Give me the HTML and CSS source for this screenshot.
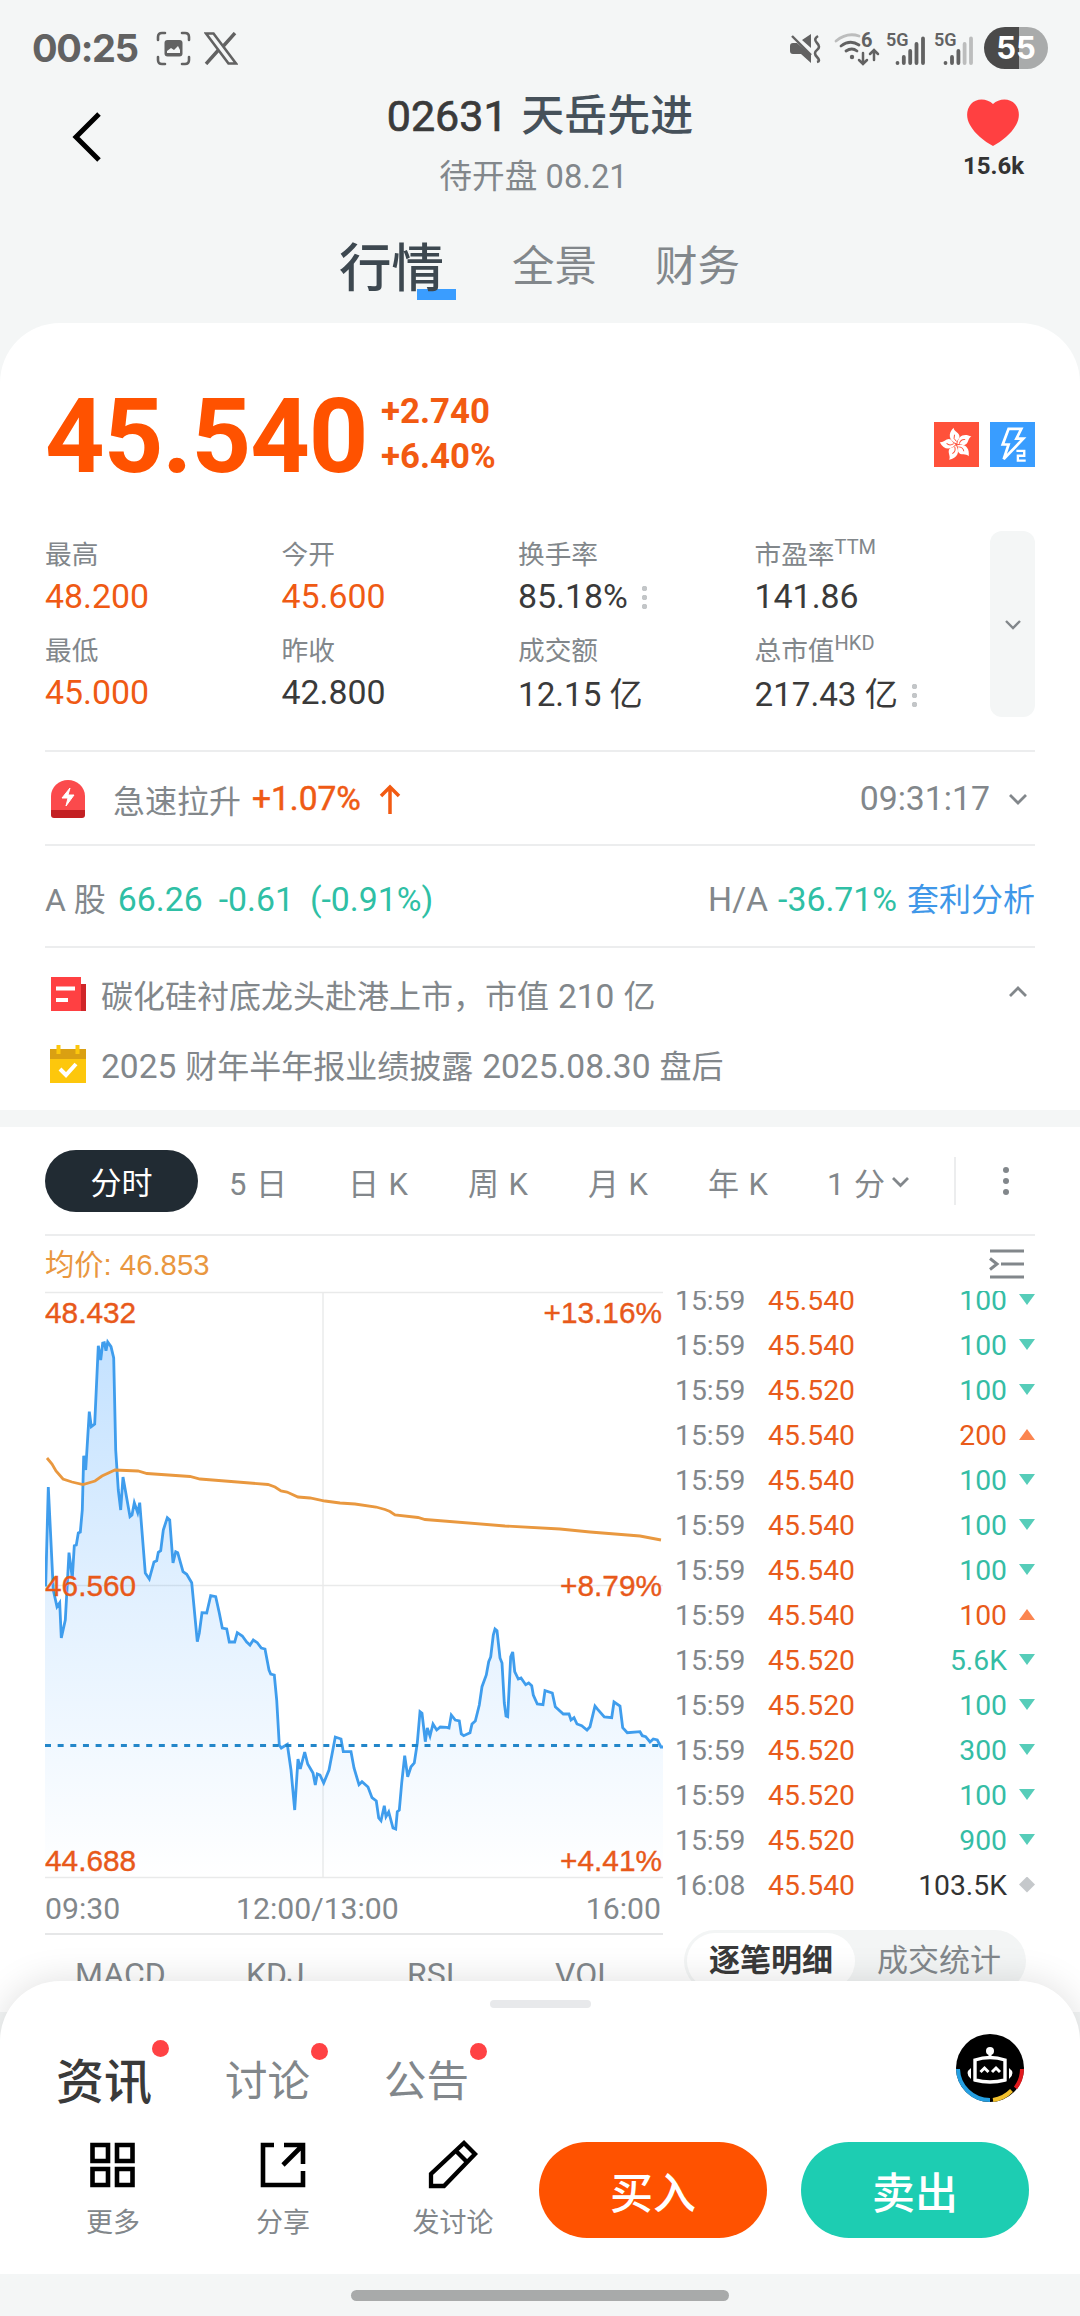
FILE: index.html
```html
<!DOCTYPE html>
<html lang="zh-CN">
<head>
    <meta charset="UTF-8">
    <meta name="viewport" content="width=device-width, initial-scale=1.0">
    <title>02631 天岳先进</title>
    <link rel="stylesheet" href="styles.css">
</head>
<body>
<div class="page">
    <div class="status-bar">
        <div class="status-left">
            <span class="clock">00:25</span>
            <svg width="35" height="35" viewBox="0 0 35 35" fill="none" stroke="#626262" stroke-width="2.6" stroke-linecap="round">
                <path d="M2 9V6q0-4 4-4h3M26 2h3q4 0 4 4v3M33 26v3q0 4-4 4h-3M9 33H6q-4 0-4-4v-3"/>
                <rect x="8.500" y="9" width="18" height="16.500" rx="3" fill="#626262" stroke="none"/>
                <path d="M11 22v-2l4-3 3 2 4-4 2 4v3z" fill="#f4f6f6" stroke="none"/>
            </svg>
            <svg class="x-icon" width="34" height="33" viewBox="0 0 34 33" fill="none" stroke="#626262">
                <path d="M2 1.5h7.500L32 31.500h-7.500z" stroke-width="2.600"/>
                <path d="M31 1L19 14.500M14 18.500L2 32" stroke-width="3.400"/>
            </svg>
        </div>
        <div class="status-right">
            <svg width="196" height="42" viewBox="788 27 196 42">
                <!-- muted speaker -->
                <g fill="#626262">
                    <path d="M790 46q0-3 3-3h4l14 12v8l-10-9h-8q-3 0-3-3zM802 40l9-6v14z"/>
                    <path d="M792 36l19 19" stroke="#626262" stroke-width="2.400"/>
                    <path d="M818 36q-5 3-1 7t0 7q-4 3 0 7t0 5" fill="none" stroke="#626262" stroke-width="2.600"/>
                </g>
                <!-- wifi 6 -->
                <g fill="none" stroke="#626262" stroke-width="2.800" stroke-linecap="round">
                    <path d="M836 41q11-9 23-5" stroke="#bcbdbd"/>
                    <path d="M841 46q9-7 18-1M846 51q6-4 11 0"/>
                    <path d="M863 53v10M859 60l4 4 4-4M874 60V51M870 54l4-4 4 4" stroke-width="2.500"/>
                </g>
                <circle cx="852" cy="57" r="2.200" fill="#626262"/>
                <text x="861" y="47" class="sig-text">6</text>
                <text x="886" y="46" class="sig-text sig-5g">5G</text>
                <text x="934" y="46" class="sig-text sig-5g">5G</text>
                <g stroke="#626262" stroke-width="3.800" stroke-linecap="round">
                    <path d="M897.500 63v0.100M903.800 57v6M910.200 51v12M916.500 44v19M923 38.500v24.500"/>
                    <path d="M945.500 63v0.100M952 57v6M958.400 51v12"/>
                    <path d="M964.600 44v19M971 38.500v24.500" stroke="#bcbdbd"/>
                </g>
            </svg>
            <span class="battery">55</span>
        </div>
    </div>

    <div class="header">
        <svg class="back" width="30" height="50" viewBox="0 0 30 50" fill="none" stroke="#000" stroke-width="5">
            <path d="M27 2L4 25l23 23"/>
        </svg>
        <div class="title-box">
            <div class="title"><span class="code">02631</span> 天岳先进</div>
            <div class="subtitle">待开盘 08.21</div>
        </div>
        <div class="favorite">
            <svg width="54" height="48" viewBox="0 0 54 48">
                <path d="M27 5C21-1 10-1 5 5c-5 6-5 14-1 21 5 9 14 16 23 21 9-5 18-12 23-21 4-7 4-15-1-21C44-1 33-1 27 5z" fill="#ff4041"/>
            </svg>
            <span>15.6k</span>
        </div>
    </div>

    <div class="top-tabs">
        <span class="top-tab active">行情</span>
        <span class="top-tab">全景</span>
        <span class="top-tab">财务</span>
    </div>

    <div class="card quote">
        <div class="price-row">
            <span class="price">45.540</span>
            <div class="change">
                <span>+2.740</span>
                <span>+6.40%</span>
            </div>
            <div class="badges">
                <svg width="45" height="45" viewBox="-23 -23 46 46">
                    <rect x="-23" y="-23" width="46" height="46" fill="#ff513a"/>
                    <g fill="#fff">
                        <path id="petal" d="M0 -1C-8-4-9-11-3-17C-3-13 4-12 3-7C2-5 0-4 0-1z"/>
                        <use href="#petal" transform="rotate(72)"/>
                        <use href="#petal" transform="rotate(144)"/>
                        <use href="#petal" transform="rotate(216)"/>
                        <use href="#petal" transform="rotate(288)"/>
                    </g>
                    <g fill="none" stroke="#ff513a" stroke-width="1">
                        <path id="vein" d="M0-3Q-4-6-2-10"/>
                        <use href="#vein" transform="rotate(72)"/>
                        <use href="#vein" transform="rotate(144)"/>
                        <use href="#vein" transform="rotate(216)"/>
                        <use href="#vein" transform="rotate(288)"/>
                    </g>
                </svg>
                <svg width="45" height="45" viewBox="0 0 46 46" fill="none" stroke="#fff" stroke-width="2.800">
                    <rect width="46" height="46" fill="#399dff" stroke="none"/>
                    <path d="M19 7h13l-5 10h7L14 38l5-15h-6z"/>
                    <path d="M27 29.500h8v5h-6.500v5h8" stroke-width="2.400"/>
                </svg>
            </div>
        </div>

        <div class="stats-row">
            <div class="stats">
                <div class="stat"><label>最高</label><b class="up">48.200</b></div>
                <div class="stat"><label>今开</label><b class="up">45.600</b></div>
                <div class="stat"><label>换手率</label><b>85.18%<i class="dots"></i></b></div>
                <div class="stat"><label>市盈率<sup>TTM</sup></label><b>141.86</b></div>
                <div class="stat"><label>最低</label><b class="up">45.000</b></div>
                <div class="stat"><label>昨收</label><b>42.800</b></div>
                <div class="stat"><label>成交额</label><b class="unit">12.15 亿</b></div>
                <div class="stat"><label>总市值<sup>HKD</sup></label><b class="unit">217.43 亿<i class="dots"></i></b></div>
            </div>
            <div class="expand">
                <svg width="16" height="10" viewBox="0 0 16 10" fill="none" stroke="#82878b" stroke-width="2.400"><path d="M1 1l7 7 7-7"/></svg>
            </div>
        </div>

        <div class="line-row alert-row">
            <svg class="row-icon siren" width="34" height="38" viewBox="0 0 34 38">
                <path d="M0 31V16a17 16 0 0 1 34 0v15z" fill="#fb4a4c"/>
                <path d="M0 30h34v5q0 3-3 3H3q-3 0-3-3z" fill="#c32023"/>
                <path d="M19 8l-8 10h6l-2 8 8-11h-6z" fill="#fff" stroke="#fff" stroke-width="1"/>
            </svg>
            <span>急速拉升</span>
            <span class="up alert-value">+1.07%</span>
            <svg width="22" height="30" viewBox="0 0 22 30" fill="none" stroke="#f25a12" stroke-width="3.500"><path d="M11 30V3M2 12l9-9 9 9"/></svg>
            <span class="right-part time">09:31:17
                <svg width="20" height="12" viewBox="0 0 20 12" fill="none" stroke="#82878b" stroke-width="2.800"><path d="M2 2l8 8 8-8"/></svg>
            </span>
        </div>

        <div class="line-row ah-row">
            <span>A 股</span>
            <span class="down">66.26</span>
            <span class="down gap-wide">-0.61</span>
            <span class="down gap-wide">(-0.91%)</span>
            <span class="right-part"><b>H/A</b> <span class="down">-36.71%</span> <a class="link">套利分析</a></span>
        </div>

        <div class="news">
            <div class="news-row">
                <svg class="row-icon" width="38" height="36" viewBox="0 0 38 36">
                    <path d="M29 8h7v27h-7z" fill="#d02629"/>
                    <path d="M1 1h30v34H1z" fill="#ff4042"/>
                    <path d="M6 12.500h19M6 24h12" stroke="#fff" stroke-width="4"/>
                </svg>
                <span>碳化硅衬底龙头赴港上市，市值 <b>210</b> 亿</span>
                <svg class="right-part chev" width="20" height="12" viewBox="0 0 20 12" fill="none" stroke="#82878b" stroke-width="2.800"><path d="M2 10l8-8 8 8"/></svg>
            </div>
            <div class="news-row">
                <svg class="row-icon" width="38" height="38" viewBox="0 0 38 38">
                    <path d="M0 4h36v34H0z" fill="#fdc70c"/>
                    <path d="M0 4h36v10H0z" fill="#daa012"/>
                    <path d="M8.500 0v9M27.500 0v9" stroke="#fdc70c" stroke-width="4"/>
                    <path d="M10 24l6 6 10-11" stroke="#fff" stroke-width="4" fill="none"/>
                </svg>
                <span><b>2025</b> 财年半年报业绩披露 <b>2025.08.30</b> 盘后</span>
            </div>
        </div>
    </div>

    <div class="chart-section">
        <div class="periods">
            <span class="period active">分时</span>
            <span class="period">5 日</span>
            <span class="period">日 K</span>
            <span class="period">周 K</span>
            <span class="period">月 K</span>
            <span class="period">年 K</span>
            <span class="period minute">1 分 <svg width="19" height="12" viewBox="0 0 19 12" fill="none" stroke="#82878b" stroke-width="2.800"><path d="M2 2l7.500 7.500L17 2"/></svg></span>
            <span class="period-more"><svg width="8" height="30" viewBox="0 0 8 30" fill="#82878b"><circle cx="4" cy="4" r="3"/><circle cx="4" cy="15" r="3"/><circle cx="4" cy="26" r="3"/></svg></span>
        </div>
        <div class="avg-row">
            <span>均价: 46.853</span>
            <svg width="36" height="32" viewBox="0 0 36 32" fill="none" stroke="#82878b" stroke-width="3">
                <path d="M1 3h34M12 16h23M1 29h34M1 10.500l7 5.500-7 5.500"/>
            </svg>
        </div>
        <div class="chart-body">
            <div class="chart-left">
                <svg class="chart" width="618" height="588" viewBox="45 1291 618 588">
                    <defs>
                        <linearGradient id="fill" gradientUnits="userSpaceOnUse" x1="0" y1="1342" x2="0" y2="1878">
                            <stop offset="0" stop-color="#3a9dff" stop-opacity="0.300"/>
                            <stop offset="0.500" stop-color="#3a9dff" stop-opacity="0.140"/>
                            <stop offset="1" stop-color="#3a9dff" stop-opacity="0"/>
                        </linearGradient>
                    </defs>
                    <path d="M45 1292.500h618M45 1585.500h618M45 1877.500h618M323 1293v585" stroke="#e9eaea" stroke-width="1.400" fill="none"/>
                    <polygon class="price-line" points="30,1890 30,1585 45.7,1585 48.3,1487 53.3,1590 57,1606.7 59.7,1602.7 61.3,1638 65.3,1620 69,1552.7 72.3,1578 74.3,1545.7 76.3,1545 78.3,1533 80.3,1532 82.3,1510 83.7,1455.7 85.7,1470 89.3,1411.7 91.3,1426.7 94.7,1424 98.3,1345.7 100.7,1360 102.7,1343 104.3,1342.6 106,1350.7 107.7,1342 111,1346.7 113.7,1358 115.7,1450 118.3,1490 120.7,1510 123,1477 126.7,1498 130,1516.7 132,1515 134.3,1502.7 137.7,1512.7 139.7,1502.7 145.3,1573 149.3,1579 154,1562 156.7,1560.7 158.3,1552.3 160.7,1550.7 163.3,1530 167.3,1517.7 169.7,1520 173,1563 175.7,1551.7 177.7,1552.7 183,1571.7 186.7,1574.3 191.7,1582.7 194,1606.7 197.3,1641.7 199.3,1633 202,1612.7 206.7,1613 210.7,1595.7 215.7,1596.7 219.3,1613 222.3,1628 226.7,1629 229.3,1642 234.7,1642 237.3,1632.7 242.3,1636 246.7,1642 250,1645 253.3,1640 257.3,1642.7 261.3,1648 265,1649 269,1670 270.7,1674 274.3,1675 276.7,1700 279.3,1745 281.3,1748 287.3,1744.3 291,1770 294.7,1810 298,1759 300.3,1769 304.7,1752 307.7,1764 313,1773 315.3,1785 317.3,1774 320,1775 323.7,1783 329,1770 335.3,1737 341,1739 343.3,1751.7 351,1751.7 354,1768 359,1784.7 362,1781.7 368,1787 372,1797.7 376.3,1801 378.7,1818 381,1820.7 384.3,1805.7 386,1816.7 388.7,1812 393,1828 395.7,1829 397.3,1811.7 399.3,1810 401.7,1783 404.7,1755.7 407.7,1776.7 411,1766.7 414.3,1763 417.3,1743 420,1711.7 422,1713.3 425.3,1741.7 427.3,1728 430,1736 433,1724 436.7,1730 440.3,1727 446.7,1727.3 449,1728 451.3,1715 455.3,1720 459.3,1721 461.3,1734 463.7,1735.7 470,1732.7 472,1724 475.3,1721 479.3,1705 482,1686.7 486.3,1675 488.7,1661.7 490.7,1657 493.3,1635 495,1629 497,1630.7 500,1658 502,1663 504.3,1703 506,1716 507.7,1716.7 510.7,1656.7 512.7,1652 514.7,1671.7 518.3,1679 521,1678 525.7,1684.7 528.7,1683 531.7,1685.7 533.3,1695 537.3,1704 543,1704.7 545,1690.7 552.3,1693 555.3,1706.7 563.3,1714 569,1714 571,1720 574,1717.7 577,1724 581.7,1725.7 587,1730 590,1726.7 595,1706 597.7,1709.3 604.3,1717 611.7,1717.7 614,1702 620,1706 622.7,1727.7 627.3,1732.7 640,1731.7 642.3,1735.7 645.7,1736.7 650,1742 653.3,1739 657.3,1740 661,1747 680,1747 680,1890"/>
                    <polyline class="avg-line" points="47,1458 52,1464 56,1471 63,1479 72,1482 83,1484.5 95,1481 102,1476 115,1470 138,1471 147,1473.5 190,1476.5 200,1479 268,1484.5 275,1487 281,1491 287,1492 298,1497 310,1498 325,1501 340,1503 355,1504 376,1507 385,1509.5 390,1511.5 395,1515 418,1517.5 425,1519.5 505,1526 560,1529 590,1532 640,1536 661,1540"/>
                    <path d="M45 1745.500h616" stroke="#2386c9" stroke-width="3" stroke-dasharray="6 6.650"/>
                    <g class="axis">
                        <text x="45" y="1323">48.432</text>
                        <text x="45" y="1596">46.560</text>
                        <text x="45" y="1871">44.688</text>
                        <text x="662" y="1323" text-anchor="end">+13.16%</text>
                        <text x="662" y="1596" text-anchor="end">+8.79%</text>
                        <text x="662" y="1871" text-anchor="end">+4.41%</text>
                    </g>
                </svg>
                <div class="time-axis">
                    <span>09:30</span><span>12:00/13:00</span><span>16:00</span>
                </div>
                <div class="indicators">
                    <span>MACD</span><span>KDJ</span><span>RSI</span><span>VOL</span>
                </div>
            </div>
            <div class="chart-right">
                <div class="ticks">
                    <div class="tick sell"><span>15:59</span><em>45.540</em><b>100</b><i></i></div>
                    <div class="tick sell"><span>15:59</span><em>45.540</em><b>100</b><i></i></div>
                    <div class="tick sell"><span>15:59</span><em>45.520</em><b>100</b><i></i></div>
                    <div class="tick buy"><span>15:59</span><em>45.540</em><b>200</b><i></i></div>
                    <div class="tick sell"><span>15:59</span><em>45.540</em><b>100</b><i></i></div>
                    <div class="tick sell"><span>15:59</span><em>45.540</em><b>100</b><i></i></div>
                    <div class="tick sell"><span>15:59</span><em>45.540</em><b>100</b><i></i></div>
                    <div class="tick buy"><span>15:59</span><em>45.540</em><b>100</b><i></i></div>
                    <div class="tick sell"><span>15:59</span><em>45.520</em><b>5.6K</b><i></i></div>
                    <div class="tick sell"><span>15:59</span><em>45.520</em><b>100</b><i></i></div>
                    <div class="tick sell"><span>15:59</span><em>45.520</em><b>300</b><i></i></div>
                    <div class="tick sell"><span>15:59</span><em>45.520</em><b>100</b><i></i></div>
                    <div class="tick sell"><span>15:59</span><em>45.520</em><b>900</b><i></i></div>
                    <div class="tick neutral"><span>16:08</span><em>45.540</em><b>103.5K</b><i></i></div>
                </div>
                <div class="switch">
                    <span class="active">逐笔明细</span>
                    <span>成交统计</span>
                </div>
            </div>
        </div>
    </div>

    <div class="sheet">
        <div class="handle"></div>
        <div class="sheet-tabs">
            <span class="sheet-tab active">资讯</span>
            <span class="sheet-tab">讨论</span>
            <span class="sheet-tab">公告</span>
            <svg class="robot" width="68" height="68" viewBox="0 0 68 68">
                <circle cx="34" cy="34" r="34" fill="#000"/>
                <g fill="none" stroke-width="4">
                    <path d="M2 35a32 32 0 0 0 32 31" stroke="#249fe2"/>
                    <path d="M37 66a32 32 0 0 0 18.500-9.500" stroke="#f2c02c"/>
                    <path d="M59.500 54a32 32 0 0 0 6.500-19" stroke="#e01a1d"/>
                    <path d="M19 26q15-5 30 0v20q-15 4-30 0z" stroke="#fff" stroke-width="3.400"/>
                    <path d="M24.500 38l4-4 4 4M36 38l4-4 4 4" stroke="#fff" stroke-width="3"/>
                    <path d="M34 17v7" stroke="#fff" stroke-width="3"/>
                </g>
                <circle cx="34" cy="17" r="4" fill="#fff"/>
                <path d="M15 34q-7 5 0 11zM53 34q7 5 0 11z" fill="#fff"/>
            </svg>
        </div>
        <div class="actions">
            <div class="action">
                <svg width="50" height="50" viewBox="0 0 50 50" fill="none" stroke="#000" stroke-width="4.600">
                    <path d="M4.500 5h15.500v16H4.500zM29 5h15.500v16H29zM4.500 29h15.500v16H4.500zM29 29h15.500v16H29z"/>
                </svg>
                <span>更多</span>
            </div>
            <div class="action">
                <svg width="50" height="50" viewBox="0 0 50 50" fill="none" stroke="#000" stroke-width="4.600">
                    <path d="M16 5H5v40h40V31M26 5h19v19M44 6L25 25"/>
                </svg>
                <span>分享</span>
            </div>
            <div class="action">
                <svg width="50" height="50" viewBox="0 0 50 50" fill="none" stroke="#000" stroke-width="4.300">
                    <path d="M36 3l11 11-31 32H3V34zM28 11l11 11"/>
                </svg>
                <span>发讨论</span>
            </div>
            <button class="trade buy-btn">买入</button>
            <button class="trade sell-btn">卖出</button>
        </div>
        <div class="nav-bar"><div class="nav-pill"></div></div>
    </div>
</div>
</body>
</html>
```

FILE: styles.css
```css
* {
    box-sizing: border-box;
}
body {
    margin: 0;
    font-family: Roboto, "Noto Sans CJK SC", sans-serif;
    background: #f4f6f6;
    color: #82878b;
}
b, em, i {
    font-weight: 400;
    font-style: normal;
}
svg {
    display: block;
    flex-shrink: 0;
}
.page {
    position: relative;
    width: 1080px;
    height: 2316px;
    overflow: hidden;
    display: flex;
    flex-direction: column;
}
.up {
    color: #ef5a14;
}
.down {
    color: #2fbfa5;
}

/* status bar */
.status-bar {
    height: 92px;
    padding: 4px 32px 0 32px;
    display: flex;
    justify-content: space-between;
    align-items: center;
}
.status-left, .status-right {
    display: flex;
    align-items: center;
}
.clock {
    width: 124px;
    font-family: Inter, sans-serif;
    font-size: 38px;
    font-weight: 700;
    letter-spacing: -1.300px;
    color: #626262;
}
.x-icon {
    margin-left: 13px;
}
.sig-text {
    font-size: 20px;
    font-weight: 700;
    fill: #626262;
}
.sig-5g {
    font-size: 18px;
    font-weight: 600;
}
.battery {
    width: 64px;
    height: 42px;
    border-radius: 21px;
    background: linear-gradient(90deg, #4a4a4a 54%, #a9abab 54%);
    color: #fff;
    font-family: Inter, sans-serif;
    font-size: 31px;
    font-weight: 700;
    line-height: 41px;
    text-align: center;
}

/* header */
.header {
    height: 118px;
    display: grid;
    grid-template-columns: 200px 1fr 200px;
}
.back {
    margin: 20px 0 0 72px;
}
.title-box {
    text-align: center;
}
.title {
    height: 50px;
    line-height: 49px;
    font-size: 43px;
    color: #46515a;
    font-weight: 500;
}
.code {
    margin-right: 3px;
    color: #3a3a3a;
    font-weight: 400;
    -webkit-text-stroke: 0.700px #3a3a3a;
}
.subtitle {
    margin-top: 17px;
    padding-right: 13px;
    height: 36px;
    line-height: 36px;
    font-size: 32.700px;
}
.favorite {
    display: flex;
    flex-direction: column;
    align-items: center;
    padding: 7px 0 0 27px;
    font-size: 24px;
    font-weight: 700;
    color: #333;
}
.favorite svg {
    margin-left: -2px;
}
.favorite span {
    margin-top: 5px;
}
.top-tabs {
    height: 113px;
    display: flex;
    align-items: center;
    padding-left: 339px;
    padding-bottom: 8px;
    gap: 58px;
}
.top-tab {
    font-size: 42.500px;
}
.top-tab.active {
    position: relative;
    margin-right: 10px;
    font-size: 52.500px;
    font-weight: 500;
    line-height: 76px;
    padding-top: 12px;
    color: #3d4850;
}
.top-tab.active::after {
    content: "";
    position: absolute;
    z-index: -1;
    left: 78px;
    bottom: 7px;
    width: 39px;
    height: 11px;
    background: #3a9dff;
}

/* quote card */
.card {
    background: #fff;
    border-radius: 60px 60px 0 0;
    padding: 0 45px;
}
.quote {
    height: 787px;
}
.price-row {
    height: 208px;
    padding-top: 60px;
    display: flex;
}
.price {
    width: 336px;
    font-size: 104px;
    line-height: 108px;
    font-weight: 700;
    letter-spacing: -1px;
    color: #ff5200;
}
.change {
    display: flex;
    flex-direction: column;
    padding-top: 6px;
    font-size: 34.800px;
    line-height: 45px;
    font-weight: 700;
    color: #f25a12;
}
.badges {
    margin-left: auto;
    padding-top: 39px;
    display: flex;
    gap: 11px;
}
.stats-row {
    height: 221px;
    display: flex;
    justify-content: space-between;
    border-bottom: 2px solid #ecedee;
}
.stats {
    width: 944px;
    display: grid;
    grid-template-columns: repeat(4, 236.500px);
    grid-auto-rows: 96px;
    margin-right: -20px;
    padding-top: 1px;
}
.stat {
    display: flex;
    flex-direction: column;
}
.stat label {
    height: 44px;
    line-height: 46px;
    font-size: 26.700px;
}
.stat sup {
    font-size: 20px;
    line-height: 0;
    vertical-align: 10px;
}
.stat b {
    height: 42px;
    line-height: 42px;
    font-size: 33.900px;
    color: #3a3a3a;
    display: flex;
    align-items: center;
    white-space: pre;
}
.stat b.unit {
    font-size: 33.200px;
    padding-top: 3px;
}
.stat b.up {
    color: #ef5a14;
}
.dots {
    margin-left: 14px;
    width: 5px;
    height: 26px;
    background: radial-gradient(circle, #c3c6c8 2.500px, transparent 3px) 0 0 / 5px 9px;
}
.expand {
    width: 45px;
    height: 186px;
    border-radius: 12px;
    background: #f4f6f6;
    display: flex;
    align-items: center;
    justify-content: center;
    padding-top: 2px;
}
.line-row {
    display: flex;
    align-items: center;
    font-size: 32px;
    border-bottom: 2px solid #ecedee;
}
.right-part {
    margin-left: auto;
}
.row-icon {
    margin-left: 5px;
}
.alert-row {
    height: 94px;
    padding-top: 1px;
}
.siren {
    margin-left: 6px;
    margin-right: 28px;
}
.alert-value {
    margin: 0 18px 0 11px;
    font-size: 33.500px;
    -webkit-text-stroke: 0.500px #ef5a14;
}
.time {
    display: flex;
    align-items: center;
    gap: 18px;
    padding-right: 7px;
    font-size: 33.800px;
}
.ah-row {
    height: 102px;
    align-items: baseline;
    padding-top: 28px;
}
.ah-row b, .ah-row .down {
    font-size: 33.800px;
}
.ah-row > .down {
    margin-left: 12px;
}
.ah-row > .gap-wide {
    margin-left: 16px;
}
.ah-row b {
    margin-right: 2px;
}
.link {
    margin-left: 2px;
    color: #3f97e8;
}
.news {
    padding-top: 11px;
}
.news-row {
    height: 70px;
    display: flex;
    align-items: center;
    font-size: 32px;
}
.news-row span {
    margin-left: 13px;
    word-spacing: 1px;
}
.news-row b {
    font-size: 33.500px;
}
.news .chev {
    margin-right: 7px;
    margin-bottom: 5px;
}

/* chart */
.chart-section {
    margin-top: 17px;
    padding: 0 45px;
    height: 885px;
    flex-shrink: 0;
    background: #fff;
}
.periods {
    height: 109px;
    display: flex;
    align-items: center;
    border-bottom: 2px solid #ecedee;
    font-size: 31px;
}
.period {
    width: 120px;
    padding-top: 2px;
    text-align: center;
    word-spacing: 2px;
}
.period.active {
    width: 153px;
    height: 62px;
    line-height: 64px;
    border-radius: 31px;
    background: #212b33;
    color: #fff;
}
.period.minute {
    width: 111px;
    margin-left: 15px;
    display: flex;
    align-items: center;
    justify-content: center;
    gap: 6px;
}
.period-more {
    margin-left: 30px;
    height: 48px;
    flex: 1;
    border-left: 2px solid #ecedee;
    display: flex;
    align-items: center;
    padding-left: 46px;
}
.avg-row {
    height: 55px;
    display: flex;
    align-items: center;
    justify-content: space-between;
    padding-right: 10px;
    font-family: "Liberation Sans", "Noto Sans CJK SC", sans-serif;
    font-size: 29.300px;
    line-height: 40px;
    color: #e9973f;
}
.avg-row span {
    padding-top: 2px;
}
.chart-body {
    display: flex;
}
.chart-left {
    width: 618px;
}
.price-line {
    fill: url(#fill);
    stroke: #3f9ded;
    stroke-width: 2.800;
}
.avg-line {
    fill: none;
    stroke: #e9983f;
    stroke-width: 2.800;
}
.axis {
    font-family: "Liberation Sans", sans-serif;
    font-size: 29.800px;
    fill: #e8591a;
    stroke: #e8591a;
    stroke-width: 0.400px;
}
.time-axis {
    height: 56px;
    display: grid;
    grid-template-columns: 1fr 170px 1fr;
    align-items: center;
    border-bottom: 2px solid #e6e7e8;
    padding-top: 5px;
    padding-right: 2px;
    font-size: 30.200px;
}
.time-axis span:nth-child(2) {
    margin-left: -32px;
    margin-right: 32px;
    white-space: nowrap;
}
.time-axis span:nth-child(3) {
    text-align: right;
}
.indicators {
    display: flex;
    padding: 20px 0 0 30px;
    font-size: 32px;
}
.indicators span:nth-child(1) {
    width: 171px;
}
.indicators span:nth-child(2) {
    width: 161px;
}
.indicators span:nth-child(3) {
    width: 148px;
}
.chart-right {
    width: 372px;
    padding-left: 12px;
}
.ticks {
    height: 639px;
    overflow: hidden;
}
.tick {
    height: 45px;
    display: flex;
    align-items: center;
    font-size: 28.300px;
    position: relative;
    top: -13px;
}
.tick span {
    width: 93px;
}
.tick em {
    color: #e95b1a;
}
.tick b {
    margin-left: auto;
}
.tick i {
    width: 16px;
    height: 11px;
    margin: 0 0 2px 12px;
}
.sell b {
    color: #35bda5;
}
.sell i {
    background: #56cdb9;
    clip-path: polygon(0 0, 100% 0, 50% 100%);
}
.buy b {
    color: #e95b1a;
}
.buy i {
    background: #fb8550;
    clip-path: polygon(0 100%, 100% 100%, 50% 0);
}
.neutral b {
    color: #333;
}
.neutral i {
    height: 16px;
    background: #c5c8cb;
    clip-path: polygon(0 50%, 50% 0, 100% 50%, 50% 100%);
}
.switch {
    margin-left: 9px;
    width: 342px;
    height: 62px;
    padding: 3px;
    border-radius: 31px;
    background: #f3f5f5;
    display: flex;
    font-size: 31px;
    line-height: 56px;
}
.switch span {
    flex: 1;
    text-align: center;
}
.switch .active {
    background: #fff;
    border-radius: 28px;
    font-weight: 700;
    color: #3a3a3a;
}

/* bottom sheet, slides over the chart */
.sheet {
    position: absolute;
    left: 0;
    right: 0;
    bottom: 0;
    height: 335px;
    border-radius: 60px 60px 0 0;
    background: #fff;
    box-shadow: 0 0 36px rgba(0, 0, 0, 0.130);
}
.handle {
    width: 101px;
    height: 8px;
    margin: 19px auto 0;
    border-radius: 4px;
    background: #e8e9eb;
}
.sheet-tabs {
    height: 110px;
    display: flex;
    align-items: center;
    padding: 29px 56px 0 56px;
}
.sheet-tab {
    position: relative;
    width: 159px;
    font-size: 42.500px;
}
.sheet-tab.active {
    width: 169px;
    font-size: 48px;
    font-weight: 500;
    color: #3a3a3a;
}
.sheet-tab::after {
    content: "";
    position: absolute;
    left: 86px;
    top: -4px;
    width: 17px;
    height: 17px;
    border-radius: 50%;
    background: #ff4244;
}
.sheet-tab.active::after {
    left: 96px;
    top: -3px;
}
.robot {
    margin: -19px 0 0 auto;
}
.actions {
    height: 156px;
    padding: 24px 51px 0 28px;
    display: flex;
}
.action {
    width: 170px;
    display: flex;
    flex-direction: column;
    align-items: center;
    font-size: 27px;
    line-height: 36px;
}
.action span {
    margin-top: 15px;
}
.action svg {
    margin-top: -2px;
}
.trade {
    width: 228px;
    height: 96px;
    border: none;
    border-radius: 48px;
    font-family: inherit;
    font-size: 43px;
    font-weight: 500;
    color: #fff;
}
.buy-btn {
    margin-left: 1px;
    background: #ff5200;
}
.sell-btn {
    margin-left: auto;
    background: #1dcdb2;
}
.nav-bar {
    height: 42px;
    background: #f4f6f6;
    display: flex;
    justify-content: center;
    padding-top: 16px;
}
.nav-pill {
    width: 378px;
    height: 11px;
    border-radius: 6px;
    background: #a8aaaa;
}
```
